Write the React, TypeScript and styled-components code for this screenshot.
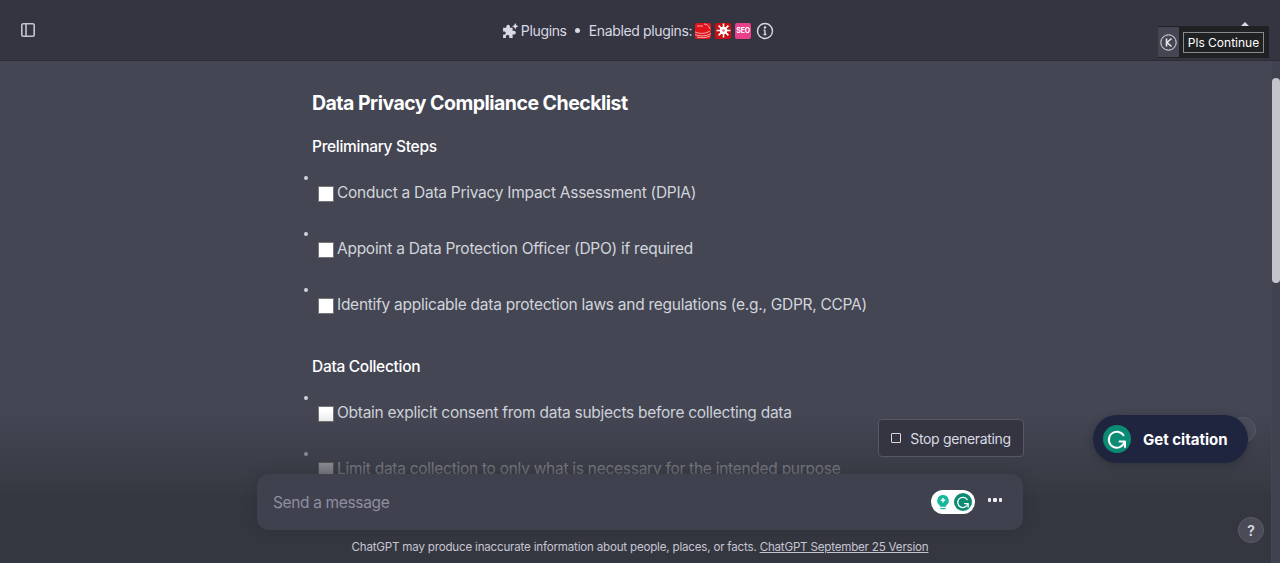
import styled, { createGlobalStyle } from 'styled-components'

const GlobalStyle = createGlobalStyle`
  html, body {
    margin: 0;
    height: 100%;
    overflow: hidden;
    background: #444654;
    font-family: Inter, "Noto Sans", sans-serif;
  }
  * { box-sizing: border-box; }
`

const Page = styled.div`
  position: relative;
  width: 1280px;
  height: 563px;
  overflow: hidden;
  background: #444654;
  color: #ececf1;
`

const Header = styled.header`
  height: 61px;
  background: #343541;
  border-bottom: 1px solid #2b2c35;
  display: flex;
  align-items: center;
  justify-content: center;
  position: relative;
  padding: 1px 0 0 0;
`

const SidebarButton = styled.button`
  position: absolute;
  left: 20px;
  top: 22px;
  width: 16px;
  height: 16px;
  padding: 0;
  background: none;
  border: none;
  color: #c5c5d2;
  display: flex;
`

const ModelInfo = styled.div`
  display: flex;
  align-items: center;
  font-size: 14px;
  letter-spacing: -0.35px;
  color: #d9d9e3;
  height: 20px;
  transform: translateX(-2px);
`

const Dot = styled.span`
  width: 5px;
  height: 5px;
  border-radius: 50%;
  background: #d9d9e3;
  margin: 0 9px 0 8px;
`

const PluginIcon = styled.span<{ $bg: string }>`
  width: 16px;
  height: 16px;
  border-radius: 2px;
  background: ${(p) => p.$bg};
  margin-left: 4px;
  display: flex;
  align-items: center;
  justify-content: center;
  overflow: hidden;
  font-size: 7px;
  letter-spacing: -0.2px;
  font-weight: 700;
  color: #fff;
`

const Main = styled.main`
  width: 640px;
  margin-left: 312px;
  padding-top: 30px;
`

const Title = styled.h1`
  margin: 0 0 19px;
  font-size: 19.5px;
  line-height: 25px;
  font-weight: 700;
  letter-spacing: -0.52px;
  color: #fff;
`

const Section = styled.h2`
  margin: 0;
  font-size: 15.5px;
  line-height: 24px;
  font-weight: 500;
  letter-spacing: -0.3px;
  color: #fff;
`

const List = styled.ul`
  list-style: none;
  margin: 0 0 28px;
  padding: 0;
`

const Item = styled.li`
  position: relative;
  height: 56px;
  padding: 22px 0 0 6px;
  display: flex;
  align-items: flex-start;
  line-height: 24px;
  font-size: 15.5px;
  letter-spacing: -0.27px;
  color: #d1d5db;

  &::before {
    content: '';
    position: absolute;
    left: -8px;
    top: 17px;
    width: 4px;
    height: 4px;
    border-radius: 50%;
    background: #d1d5db;
  }
`

const Check = styled.span`
  width: 16px;
  height: 16px;
  margin: 5px 3px 0 0;
  flex: none;
  background: #fff;
  border: 1px solid #767676;
`

const FadeBar = styled.div`
  position: absolute;
  left: 0;
  right: 9px;
  bottom: 0;
  height: 152px;
  background: linear-gradient(180deg, rgba(53, 55, 64, 0), #353740 58.85%);
`

const Composer = styled.div`
  position: absolute;
  left: 257px;
  top: 474px;
  width: 766px;
  height: 56px;
  background: #40414f;
  border-radius: 12px;
  box-shadow: 0 0 15px rgba(0, 0, 0, 0.1);
  display: flex;
  align-items: center;
  padding: 0 21px 0 16px;
  font-size: 15.5px;
  letter-spacing: -0.35px;
  color: #8e8ea0;
`

const Placeholder = styled.span`
  flex: 1;
`

const GrammarlyPill = styled.div`
  width: 44px;
  height: 24px;
  border-radius: 12px;
  background: #fff;
  display: flex;
  align-items: center;
  justify-content: space-between;
  padding: 0 3px 0 5px;
  margin-right: 13px;
`

const MoreDots = styled.div`
  display: flex;
  gap: 2px;
  margin-bottom: 4px;
`

const MoreDot = styled.span`
  width: 3.5px;
  height: 3.5px;
  background: #ececf1;
  border-radius: 1px;
`

const Footnote = styled.div`
  position: absolute;
  left: 0;
  width: 1280px;
  top: 539px;
  text-align: center;
  font-size: 11.6px;
  letter-spacing: -0.2px;
  line-height: 16px;
  color: #c5c5d2;

  a {
    color: inherit;
    text-decoration: underline;
  }
`

const StopButton = styled.button`
  position: absolute;
  left: 878px;
  top: 419px;
  width: 146px;
  height: 38px;
  background: #343541;
  border: 1px solid #565869;
  border-radius: 4px;
  color: #d9d9e3;
  font-family: inherit;
  font-size: 14px;
  letter-spacing: -0.33px;
  display: flex;
  align-items: center;
  justify-content: center;
  gap: 9px;
  padding: 0;
`

const StopBox = styled.span`
  width: 10px;
  height: 10px;
  border: 1px solid #d9d9e3;
  border-radius: 1px;
`

const ScrollCircle = styled.div`
  position: absolute;
  left: 1230px;
  top: 417px;
  width: 26px;
  height: 26px;
  border-radius: 50%;
  background: #4b4c5a;
  border: 1px solid #565869;
`

const CitationPill = styled.div`
  position: absolute;
  left: 1093px;
  top: 415px;
  width: 155px;
  height: 48px;
  border-radius: 24px;
  background: #1f243f;
  box-shadow: 0 2px 10px rgba(0, 0, 0, 0.2);
  display: flex;
  align-items: center;
  padding-left: 10px;
  gap: 12px;
  color: #fff;
  font-size: 15px;
  font-weight: 700;
`

const HelpButton = styled.div`
  position: absolute;
  left: 1238px;
  top: 517px;
  width: 26px;
  height: 26px;
  border-radius: 50%;
  background: #4a4b57;
  border: 1px solid #5a5b68;
  color: #d9d9e3;
  font-size: 14px;
  font-weight: 600;
  display: flex;
  align-items: center;
  justify-content: center;
`

const ScrollTrack = styled.div`
  position: absolute;
  right: 0;
  top: 61px;
  bottom: 0;
  width: 8px;
  background: #41424f;
`

const ScrollThumb = styled.div`
  position: absolute;
  left: 0;
  top: 17px;
  width: 8px;
  height: 205px;
  border-radius: 4px;
  background: #c4c4cc;
`

const ExtensionBar = styled.div`
  position: absolute;
  left: 1158px;
  top: 26px;
  width: 111px;
  height: 32px;
  background: #202123;
  display: flex;
  align-items: center;
`

const ExtensionLogo = styled.div`
  width: 21px;
  height: 30px;
  background: #444654;
  display: flex;
  align-items: center;
  justify-content: center;
  margin-right: 4px;
`

const ExtensionButton = styled.div`
  width: 81px;
  height: 21px;
  border: 1px solid #8a8a8a;
  color: #fff;
  font-size: 12px;
  display: flex;
  align-items: center;
  justify-content: center;
  white-space: nowrap;
`

const UpCaret = styled.span`
  position: absolute;
  left: 1241px;
  top: 22px;
  width: 0;
  height: 0;
  border-left: 4px solid transparent;
  border-right: 4px solid transparent;
  border-bottom: 4px solid #d9d9e3;
`

function GrammarlyMark({ size }: { size: number }) {
  return (
    <svg width={size} height={size} viewBox="0 0 28 28">
      <circle cx="14" cy="14" r="14" fill="#0b8a74" />
      <path
        d="M20.500 10.200A8 8 0 1 0 21.500 17"
        fill="none"
        stroke="#fff"
        strokeWidth="2"
        strokeLinecap="round"
      />
      <path d="M16.500 16.500h5.500v5.500" fill="none" stroke="#fff" strokeWidth="2" strokeLinecap="round" strokeLinejoin="round" />
    </svg>
  )
}

const preliminary = [
  'Conduct a Data Privacy Impact Assessment (DPIA)',
  'Appoint a Data Protection Officer (DPO) if required',
  'Identify applicable data protection laws and regulations (e.g., GDPR, CCPA)',
]

const collection = [
  'Obtain explicit consent from data subjects before collecting data',
  'Limit data collection to only what is necessary for the intended purpose',
]

export default function App() {
  return (
    <Page>
      <GlobalStyle />
      <Header>
        <SidebarButton aria-label="Toggle sidebar">
          <svg width="16" height="16" viewBox="0 0 16 16" fill="none" stroke="currentColor" strokeWidth="1.6">
            <rect x="1.800" y="1.800" width="12.400" height="12.400" rx="1.500" />
            <path d="M6 1.800v12.400" />
          </svg>
        </SidebarButton>
        <ModelInfo>
          <svg width="17" height="17" viewBox="0 0 16 16" fill="#d9d9e3" style={{ marginRight: 2 }}>
            <path d="M1 5.500h3.200c-.6-2 .6-3 1.600-3s2.200 1 1.600 3H10v3c1.800-.6 3 .4 3 1.500s-1.200 2.200-3 1.600V15H6.800c.6-1.800-.4-2.800-1.500-2.800S3.200 13.200 3.800 15H1v-3.200c1.500.5 2.500-.5 2.500-1.500S2.500 8.500 1 9z" />
            <path d="M12.500 1l1 2 2 1-2 1-1 2-1-2-2-1 2-1z" />
          </svg>
          Plugins
          <Dot />
          Enabled plugins:
          <PluginIcon $bg="#e0141a" style={{ marginLeft: 3 }}>
            <svg width="16" height="16" viewBox="0 0 16 16" fill="none" stroke="#f4a9a9">
              <path d="M0 9c5 2 10 2 15-1M0 11.500c5 2 11 2 16-1M2 14c4 1 9 1 13-1" strokeWidth="1" />
              <path d="M9 1c3 0 5 2 6 5M2 3h6" strokeWidth="1" />
            </svg>
          </PluginIcon>
          <PluginIcon $bg="#c80f14">
            <svg width="15" height="15" viewBox="0 0 14 14" stroke="#fff" strokeWidth="1.500">
              <path d="M7 .5v13M.5 7h13M2.400 2.400l9.200 9.200M11.600 2.400l-9.200 9.200" />
              <circle cx="7" cy="7" r="3.500" fill="#fff" stroke="none" />
              <circle cx="7" cy="7" r="1.200" fill="#e46a6e" stroke="none" />
            </svg>
          </PluginIcon>
          <PluginIcon $bg="#e8408a">SEO</PluginIcon>
          <svg width="18" height="18" viewBox="0 0 18 18" fill="none" stroke="#d9d9e3" strokeWidth="1.400" style={{ marginLeft: 5 }}>
            <circle cx="9" cy="9" r="7.500" />
            <path d="M9 8.200v4.300M7.600 8.200H9M7.600 12.500h2.800" />
            <circle cx="9" cy="5.500" r="0.600" fill="#d9d9e3" />
          </svg>
        </ModelInfo>
      </Header>

      <Main>
        <Title>Data Privacy Compliance Checklist</Title>
        <Section>Preliminary Steps</Section>
        <List>
          {preliminary.map((text) => (
            <Item key={text}>
              <Check />
              {text}
            </Item>
          ))}
        </List>
        <Section>Data Collection</Section>
        <List>
          {collection.map((text) => (
            <Item key={text}>
              <Check />
              {text}
            </Item>
          ))}
        </List>
      </Main>

      <ScrollTrack>
        <ScrollThumb />
      </ScrollTrack>
      <FadeBar />

      <StopButton>
        <StopBox />
        Stop generating
      </StopButton>

      <Composer>
        <Placeholder>Send a message</Placeholder>
        <GrammarlyPill>
          <svg width="14" height="16" viewBox="0 0 16 18">
            <path d="M8 1a6.500 6.500 0 0 0-3.500 12v1.500h7V13A6.500 6.500 0 0 0 8 1z" fill="#14b89a" />
            <path d="M8 4.500v5M5.500 7h5" stroke="#fff" strokeWidth="1.600" />
            <path d="M5 16.500h6" stroke="#14b89a" strokeWidth="1.500" />
          </svg>
          <GrammarlyMark size={18} />
        </GrammarlyPill>
        <MoreDots>
          <MoreDot />
          <MoreDot />
          <MoreDot />
        </MoreDots>
      </Composer>

      <Footnote>
        ChatGPT may produce inaccurate information about people, places, or facts.{' '}
        <a href="#version">ChatGPT September 25 Version</a>
      </Footnote>

      <ScrollCircle />
      <CitationPill>
        <GrammarlyMark size={28} />
        Get citation
      </CitationPill>
      <HelpButton>?</HelpButton>

      <UpCaret />
      <ExtensionBar>
        <ExtensionLogo>
          <svg width="17" height="17" viewBox="0 0 17 17" fill="none" stroke="#e5e5e5">
            <circle cx="8.500" cy="8.500" r="7.700" strokeWidth="1" />
            <path d="M6.500 4.500v8M11.500 4.500L7 8.500l4.500 4" strokeWidth="1.600" />
          </svg>
        </ExtensionLogo>
        <ExtensionButton>Pls Continue</ExtensionButton>
      </ExtensionBar>
    </Page>
  )
}
